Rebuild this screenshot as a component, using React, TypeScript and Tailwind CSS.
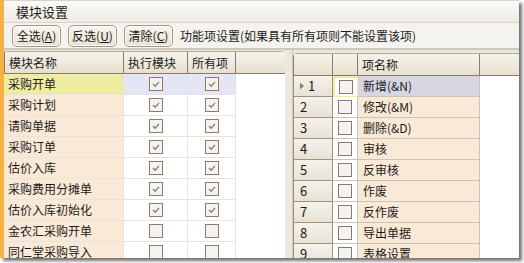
import React from 'react'

const leftRows = [
  { name: '采购开单', exec: true, all: true },
  { name: '采购计划', exec: true, all: true },
  { name: '请购单据', exec: true, all: true },
  { name: '采购订单', exec: true, all: true },
  { name: '估价入库', exec: true, all: true },
  { name: '采购费用分摊单', exec: true, all: true },
  { name: '估价入库初始化', exec: true, all: true },
  { name: '金农汇采购开单', exec: false, all: false },
  { name: '同仁堂采购导入', exec: false, all: false },
]

const rightRows = ['新增(&N)', '修改(&M)', '删除(&D)', '审核', '反审核', '作废', '反作废', '导出单据', '表格设置']

function Check({ checked }: { checked: boolean }) {
  return (
    <span className="flex h-[14px] w-[14px] items-center justify-center border border-[#8c7a6b] bg-[#f5f3f0]">
      {checked && (
        <svg width="10" height="10" viewBox="0 0 10 10">
          <path d="M2 5 L4.2 7.2 L8 2.8" fill="none" stroke="#8a7b72" strokeWidth="1.3" />
        </svg>
      )}
    </span>
  )
}

function ToolButton({ label, hot }: { label: string; hot: string }) {
  return (
    <button className="flex h-[22px] w-[49px] items-center justify-center rounded-[5px] border border-[#a3968a] bg-gradient-to-b from-[#f8f5ef] to-[#e9e2d5] text-[12px] text-[#1b1b1b] shadow-[inset_0_0_0_1px_#fbfaf7]">
      {label}(<span className="underline">{hot}</span>)
    </button>
  )
}

const headCell =
  'flex h-full items-center border-r border-[#8d7a69] bg-gradient-to-b from-[#f6f3eb] to-[#e7e0d0] px-[4px]'

export default function App() {
  return (
    <div className="h-[263px] w-[524px] bg-white" style={{ fontFamily: '"Noto Sans CJK SC", "Noto Sans", sans-serif' }}>
      <div className="flex h-[258px] w-[519px] flex-col overflow-hidden border-l-4 border-[#f5b242] bg-[#f5f3ee] text-[12px] leading-none text-[#1b1b1b] shadow-[3px_3px_3px_rgba(0,0,0,0.55)]">
        {/* title */}
        <div className="flex h-[23px] shrink-0 items-center border-t border-b border-[#d8d3c8] bg-gradient-to-b from-[#fbfaf6] to-[#eeebe3] pl-[12px] text-[13px]">
          模块设置
        </div>

        {/* toolbar */}
        <div className="flex h-[27px] shrink-0 items-center gap-[7px] border-b-2 border-[#cfc9bd] pl-[8px] pt-[1px]">
          <ToolButton label="全选" hot="A" />
          <ToolButton label="反选" hot="U" />
          <ToolButton label="清除" hot="C" />
          <span className="text-[12px]">功能项设置(如果具有所有项则不能设置该项)</span>
        </div>

        {/* body */}
        <div className="flex min-h-0 flex-1 bg-[#ece8de]">
          {/* left grid */}
          <div className="mt-[1px] flex w-[281px] shrink-0 flex-col overflow-hidden rounded-tr-[4px] bg-white">
            <div className="flex h-[23px] shrink-0 border-y border-[#8d7a69] border-t-[#b7ab9d]">
              <div className={`${headCell} w-[120px] border-l`}>模块名称</div>
              <div className={`${headCell} w-[64px]`}>执行模块</div>
              <div className={`${headCell} w-[48px]`}>所有项</div>
              <div className={`${headCell} flex-1 border-r-0`} />
            </div>
            {leftRows.map((r, i) => {
              const sel = i === 0
              return (
                <div key={r.name} className="flex h-[21px] shrink-0">
                  <div
                    className={`flex w-[120px] items-center border-b border-r border-[#e9e4da] pb-[1px] pl-[4px] ${
                      sel ? 'bg-[#eeeba3]' : 'bg-[#fae9d6]'
                    }`}
                  >
                    {r.name}
                  </div>
                  <div
                    className={`flex w-[64px] items-center justify-center border-b border-r border-[#e9e4da] ${
                      sel ? 'bg-[#e5e5f8]' : 'bg-white'
                    }`}
                  >
                    <Check checked={r.exec} />
                  </div>
                  <div
                    className={`flex w-[48px] items-center justify-center border-b border-r border-[#e9e4da] ${
                      sel ? 'bg-[#e5e5f8]' : 'bg-white'
                    }`}
                  >
                    <Check checked={r.all} />
                  </div>
                  <div className="flex-1 bg-white" />
                </div>
              )
            })}
          </div>

          {/* splitter */}
          <div className="w-[8px] shrink-0 border-r border-[#cfc8b9] bg-[#ece8de]" />

          {/* right grid */}
          <div className="mt-[3px] flex min-w-0 flex-1 flex-col overflow-hidden rounded-tl-[4px] bg-white">
            <div className="flex h-[23px] shrink-0 border-y border-[#8d7a69] border-t-[#b7ab9d]">
              <div className={`${headCell} w-[40px] border-l`} />
              <div className={`${headCell} w-[25px]`} />
              <div className={`${headCell} w-[122px]`}>项名称</div>
              <div className={`${headCell} flex-1 border-r-0`} />
            </div>
            {rightRows.map((name, i) => {
              const sel = i === 0
              return (
                <div key={name} className="flex h-[21px] shrink-0">
                  <div className="flex w-[40px] items-center border-b border-l border-r border-[#9f9282] bg-gradient-to-b from-[#f5f2ea] to-[#e8e2d4] pb-[1px] pl-[5px] text-[13px]">
                    {sel && (
                      <svg width="6" height="8" viewBox="0 0 6 8" className="mr-[3px]">
                        <path d="M1 0.5 L5 4 L1 7.5 Z" fill="#8c7e70" />
                      </svg>
                    )}
                    <span className={sel ? '' : 'ml-[1px]'}>{i + 1}</span>
                  </div>
                  <div
                    className={`flex w-[25px] items-center justify-center border-b border-r border-[#c9c4bb] ${
                      sel ? 'border-2 border-[#efeba0] bg-white' : 'bg-white'
                    }`}
                  >
                    <Check checked={false} />
                  </div>
                  <div
                    className={`flex w-[122px] items-center border-b border-r border-[#c9c4bb] pb-[1px] pl-[5px] ${
                      sel ? 'bg-[#d6d6e3]' : 'bg-[#fae9d6]'
                    }`}
                  >
                    {name}
                  </div>
                  <div className="flex-1 bg-white" />
                </div>
              )
            })}
          </div>
        </div>
      </div>
    </div>
  )
}
